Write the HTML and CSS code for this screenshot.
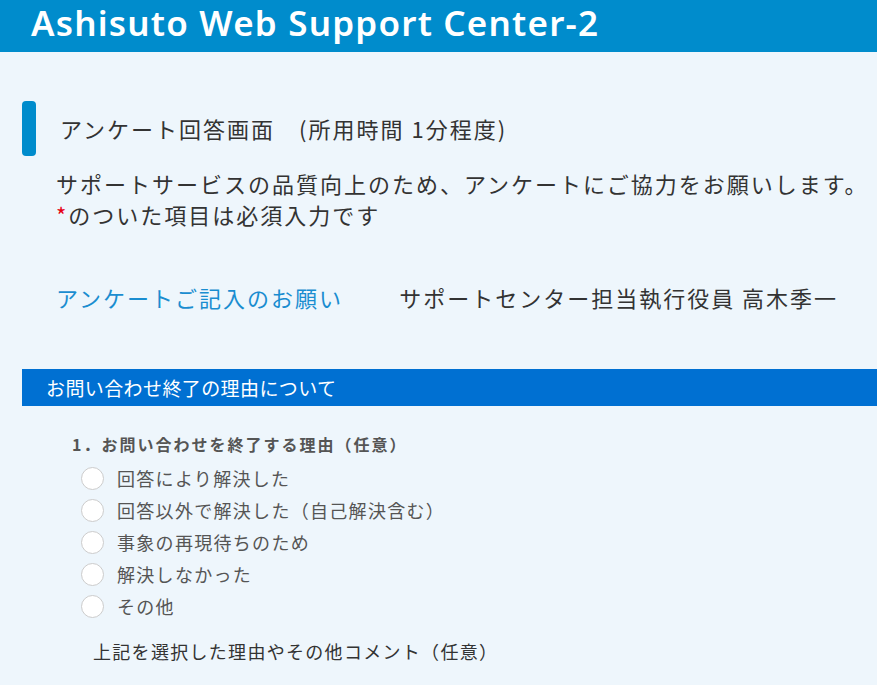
FILE: index.html
```html
<!DOCTYPE html>
<html lang="ja">
<head>
    <meta charset="UTF-8">
    <meta name="viewport" content="width=device-width, initial-scale=1.0">
    <title>アンケート回答画面 - Ashisuto Web Support Center-2</title>
    <link rel="stylesheet" href="styles.css">
</head>
<body>
    <header class="site-header">
        <h1>Ashisuto Web Support Center-2</h1>
    </header>

    <main class="survey">
        <div class="page-title">
            <span class="bar"></span>
            <h2>アンケート回答画面　(所用時間 1分程度)</h2>
        </div>

        <p class="lead">
            サポートサービスの品質向上のため、アンケートにご協力をお願いします。<br>
            <span class="req">*</span>のついた項目は必須入力です
        </p>

        <div class="greeting">
            <a href="#" class="greeting-link">アンケートご記入のお願い</a>
            <span class="greeting-from">サポートセンター担当執行役員 高木季一</span>
        </div>

        <section class="block">
            <h3 class="block-title">お問い合わせ終了の理由について</h3>

            <div class="question">
                <p class="q-label">1．お問い合わせを終了する理由（任意）</p>
                <ul class="choices">
                    <li><label><input type="radio" name="reason"><span>回答により解決した</span></label></li>
                    <li><label><input type="radio" name="reason"><span>回答以外で解決した（自己解決含む）</span></label></li>
                    <li><label><input type="radio" name="reason"><span>事象の再現待ちのため</span></label></li>
                    <li><label><input type="radio" name="reason"><span>解決しなかった</span></label></li>
                    <li><label><input type="radio" name="reason"><span>その他</span></label></li>
                </ul>
                <p class="comment-label">上記を選択した理由やその他コメント（任意）</p>
            </div>
        </section>
    </main>
</body>
</html>
```

FILE: styles.css
```css
* {
    margin: 0;
    padding: 0;
    box-sizing: border-box;
}

body {
    font-family: "Noto Sans CJK JP", sans-serif;
    background: #eef6fc;
    color: #333;
    min-height: 100vh;
}

/* header */
.site-header {
    background: #008ccc;
    height: 52px;
    padding-left: 31px;
}

.site-header h1 {
    font-family: "Noto Sans", sans-serif;
    font-weight: 600;
    font-size: 35px;
    line-height: 46px;
    letter-spacing: 1.2px;
    color: white;
}

/* page title */
.page-title {
    display: flex;
    align-items: center;
    gap: 24px;
    margin: 49px 0 0 22px;
}

.page-title .bar {
    width: 14px;
    height: 55px;
    background: #008ccc;
    border-radius: 4px;
}

.page-title h2 {
    font-size: 22px;
    font-weight: 400;
    letter-spacing: 2px;
    line-height: 31px;
}

.lead {
    margin-top: 12px;
    padding-left: 56px;
    font-size: 22px;
    letter-spacing: 2px;
    line-height: 31px;
}

.req {
    color: #e60012;
}

.greeting {
    display: flex;
    gap: 56px;
    margin-top: 52px;
    padding-left: 56px;
    font-size: 22px;
    letter-spacing: 2px;
    line-height: 31px;
}

.greeting-link {
    color: #1a8dd0;
    text-decoration: none;
}

/* question block */
.block {
    margin: 56px 0 0 22px;
}

.block-title {
    background: #0070d2;
    color: white;
    font-size: 19px;
    font-weight: 400;
    letter-spacing: 0.4px;
    height: 37px;
    line-height: 37px;
    padding-left: 24px;
}

.question {
    padding: 26px 0 0 50px;
}

.q-label {
    color: #555;
    font-size: 16px;
    font-weight: 700;
    letter-spacing: 2px;
    line-height: 24px;
}

.choices {
    list-style: none;
    margin-top: 6px;
    padding-left: 9px;
}

.choices li {
    height: 32px;
    display: flex;
    align-items: center;
}

.choices label {
    display: flex;
    align-items: center;
    gap: 13px;
    color: #555;
    font-size: 18px;
    letter-spacing: 1.3px;
}

.choices input {
    appearance: none;
    width: 23px;
    height: 23px;
    border-radius: 50%;
    border: 1px solid #ccc;
    background: white;
    margin: 0;
}

.comment-label {
    margin: 17px 0 0 21px;
    font-size: 18px;
    letter-spacing: 1.3px;
    line-height: 24px;
}
```
